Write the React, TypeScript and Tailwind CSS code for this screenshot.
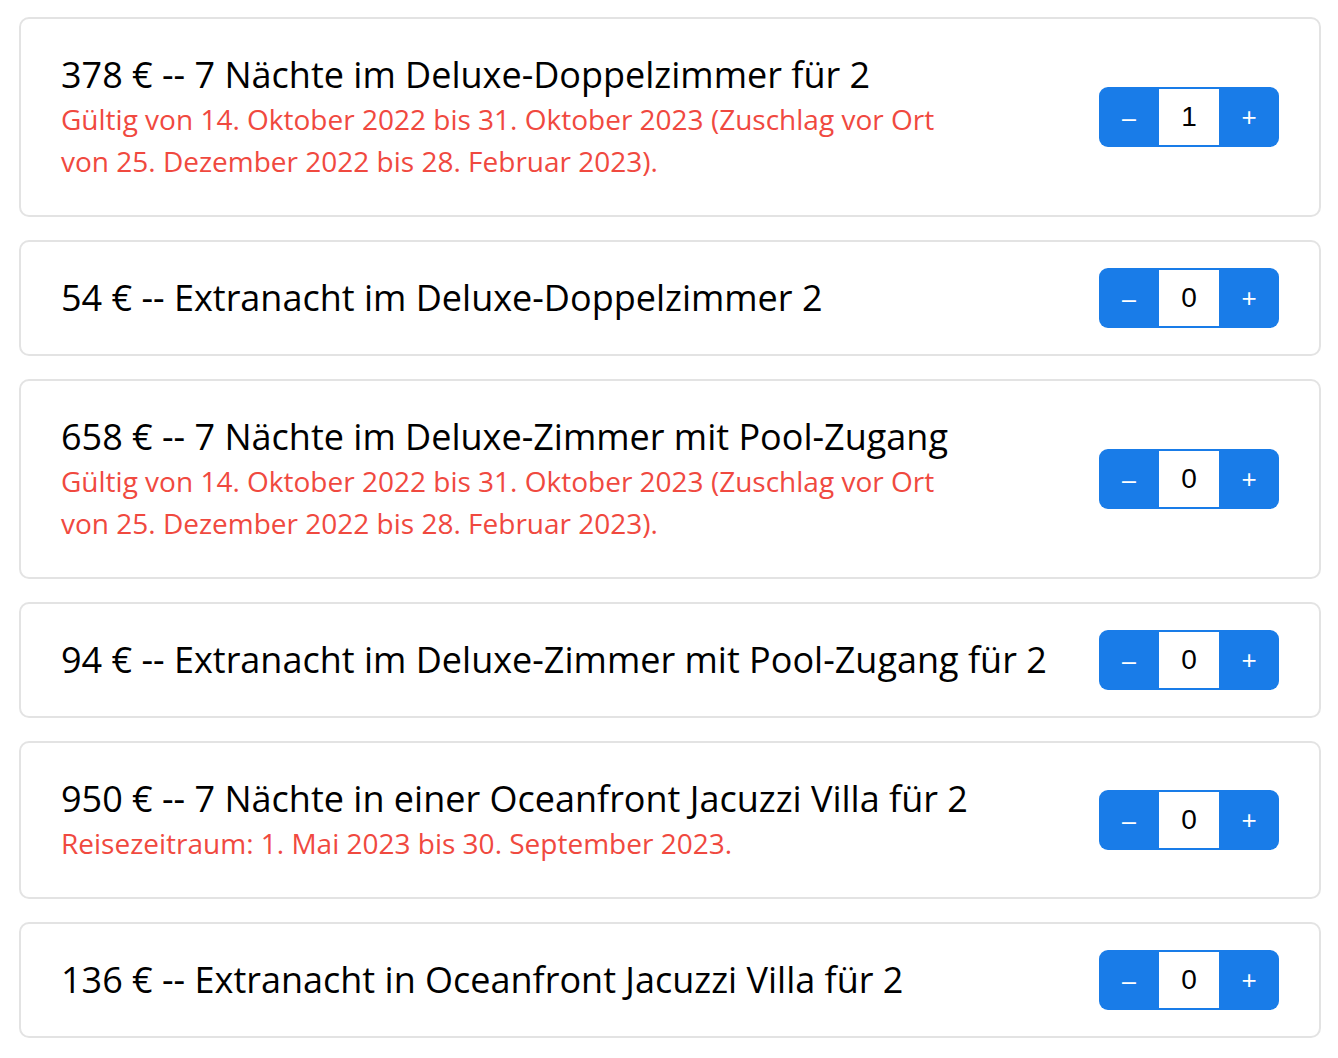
import React, { useState } from 'react';

interface Offer {
  title: string;
  note?: string;
  qty: number;
}

const offers: Offer[] = [
  {
    title: '378 € -- 7 Nächte im Deluxe-Doppelzimmer für 2',
    note: 'Gültig von 14. Oktober 2022 bis 31. Oktober 2023 (Zuschlag vor Ort von 25. Dezember 2022 bis 28. Februar 2023).',
    qty: 1,
  },
  { title: '54 € -- Extranacht im Deluxe-Doppelzimmer 2', qty: 0 },
  {
    title: '658 € -- 7 Nächte im Deluxe-Zimmer mit Pool-Zugang',
    note: 'Gültig von 14. Oktober 2022 bis 31. Oktober 2023 (Zuschlag vor Ort von 25. Dezember 2022 bis 28. Februar 2023).',
    qty: 0,
  },
  { title: '94 € -- Extranacht im Deluxe-Zimmer mit Pool-Zugang für 2', qty: 0 },
  {
    title: '950 € -- 7 Nächte in einer Oceanfront Jacuzzi Villa für 2',
    note: 'Reisezeitraum: 1. Mai 2023 bis 30. September 2023.',
    qty: 0,
  },
  { title: '136 € -- Extranacht in Oceanfront Jacuzzi Villa für 2', qty: 0 },
];

const Stepper: React.FC<{ initial: number }> = ({ initial }) => {
  const [value, setValue] = useState(initial);
  return (
    <div className="flex h-[60px] w-[180px] shrink-0 overflow-hidden rounded-[9px] bg-[#197ce8] font-['Liberation_Sans',Arial,sans-serif]">
      <button
        className="flex w-[60px] items-center justify-center pt-[3px] text-[25px] leading-none text-white"
        onClick={() => setValue((v) => Math.max(0, v - 1))}
      >
        –
      </button>
      <div className="my-[2px] flex w-[60px] items-center justify-center bg-white text-[28px] text-black">
        {value}
      </div>
      <button
        className="flex w-[60px] items-center justify-center text-[26px] leading-none text-white"
        onClick={() => setValue((v) => v + 1)}
      >
        +
      </button>
    </div>
  );
};

export default function App() {
  return (
    <div className="min-h-screen bg-white pl-[19px] pr-[17px] pt-[17px] font-['Open_Sans',sans-serif]">
      <div className="flex flex-col gap-[23px]">
        {offers.map((o) => (
          <div
            key={o.title}
            className="flex items-center justify-between rounded-[10px] border-2 border-[#e3e3e3] py-[26px] pl-[40px] pr-[40px]"
          >
            <div className="py-[7px]">
              <div className="text-[36px] leading-[46px] text-black">{o.title}</div>
              {o.note && (
                <div className="max-w-[900px] text-[28px] leading-[42px] text-[#f0493f]">{o.note}</div>
              )}
            </div>
            <Stepper initial={o.qty} />
          </div>
        ))}
      </div>
    </div>
  );
}
